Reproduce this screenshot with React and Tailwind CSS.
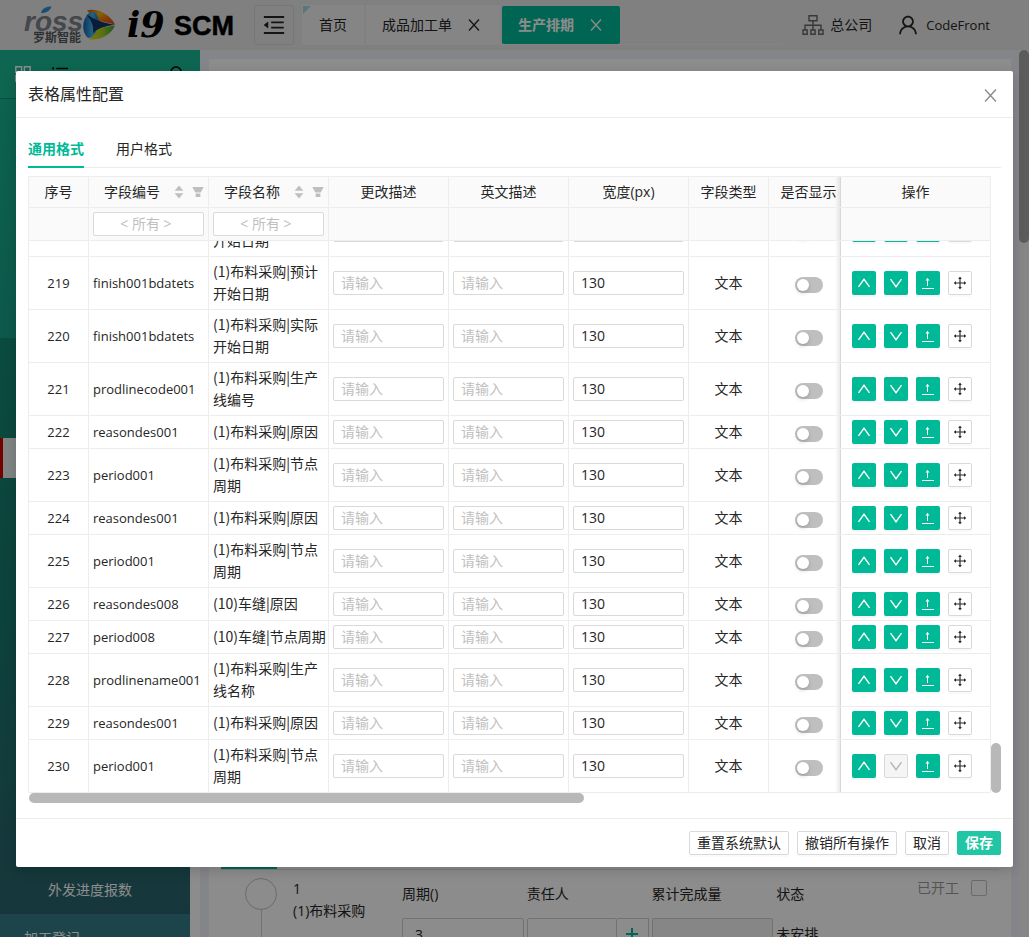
import React from 'react';
import {
  AiOutlineDrag,
  AiOutlineUser,
  AiOutlineMenuFold,
  AiOutlineAppstore,
  AiOutlineUnorderedList,
  AiOutlineSearch,
} from 'react-icons/ai';

const ROWS = [
  { no: 218, code: 'finish001bdatets', name: ['(1)布料采购|计划', '开始日期'] },
  { no: 219, code: 'finish001bdatets', name: ['(1)布料采购|预计', '开始日期'] },
  { no: 220, code: 'finish001bdatets', name: ['(1)布料采购|实际', '开始日期'] },
  { no: 221, code: 'prodlinecode001', name: ['(1)布料采购|生产', '线编号'] },
  { no: 222, code: 'reasondes001', name: ['(1)布料采购|原因'] },
  { no: 223, code: 'period001', name: ['(1)布料采购|节点', '周期'] },
  { no: 224, code: 'reasondes001', name: ['(1)布料采购|原因'] },
  { no: 225, code: 'period001', name: ['(1)布料采购|节点', '周期'] },
  { no: 226, code: 'reasondes008', name: ['(10)车缝|原因'] },
  { no: 227, code: 'period008', name: ['(10)车缝|节点周期'] },
  { no: 228, code: 'prodlinename001', name: ['(1)布料采购|生产', '线名称'] },
  { no: 229, code: 'reasondes001', name: ['(1)布料采购|原因'] },
  { no: 230, code: 'period001', name: ['(1)布料采购|节点', '周期'] },
];

const CELL = 'border-r border-b border-[#ededed] px-1';
const FIXED =
  "sticky right-0 border-r border-b border-l border-[#ededed] before:absolute before:inset-y-0 before:right-full before:w-1.5 before:bg-linear-to-l before:from-black/10 before:to-transparent before:content-['']";
const FIELD =
  'block h-6 w-full min-w-0 rounded-xs border border-[#d9d9d9] bg-white px-[7px] pb-0.5 text-sm text-[#262626] placeholder:text-[#bfbfbf] outline-none';
const PRIMARY =
  'flex size-6 items-center justify-center rounded-xs bg-[#00b996] text-sm text-white shadow-[0_2px_0_rgba(0,0,0,0.04)]';
const PLAIN =
  'flex size-6 items-center justify-center rounded-xs border border-[#d9d9d9] bg-white text-base text-[#262626] shadow-[0_2px_0_rgba(0,0,0,0.02)]';
const FOOT =
  'h-6 rounded-xs border border-[#d9d9d9] bg-white px-[7px] text-sm leading-5 whitespace-nowrap text-[#262626] shadow-[0_2px_0_rgba(0,0,0,0.02)]';

function Columns() {
  return (
    <colgroup>
      <col className="w-[61px]" />
      <col className="w-[120px]" />
      <col className="w-[120px]" />
      <col className="w-[120px]" />
      <col className="w-[120px]" />
      <col className="w-[120px]" />
      <col className="w-[80px]" />
      <col className="w-[80px]" />
      <col className="w-[151px]" />
    </colgroup>
  );
}

function Sorter() {
  return (
    <svg viewBox="0 0 10 14" className="h-3.5 w-2.5" fill="#bfbfbf" aria-hidden="true">
      <path d="M5 .6 9.400 5.800H.6zM5 13.400.6 8.200h8.800z" />
    </svg>
  );
}

function Filter() {
  return (
    <svg viewBox="0 0 12 12" className="size-3" fill="#bfbfbf" aria-hidden="true">
      <path d="M.8 1h10.400c.4 0 .5.3.3.6L8.600 6.400H3.400L.5 1.600C.3 1.300.4 1 .8 1zM3.600 7.600h4.800v3c0 .3-.1.4-.4.4H4c-.3 0-.4-.1-.4-.4z" />
    </svg>
  );
}

function Close({ className }) {
  return (
    <svg viewBox="0 0 12 12" className={className} fill="none" stroke="currentColor" strokeWidth="1.3" aria-hidden="true">
      <path d="M1 .5 11 11.500M11 .5 1 11.500" />
    </svg>
  );
}

function Up() {
  return (
    <svg viewBox="0 0 14 14" className="size-3.5" fill="none" stroke="currentColor" strokeWidth="1.4" aria-hidden="true">
      <path d="M1.500 10.800 7 3.300l5.500 7.500" />
    </svg>
  );
}

function Down() {
  return (
    <svg viewBox="0 0 14 14" className="size-3.5" fill="none" stroke="currentColor" strokeWidth="1.4" aria-hidden="true">
      <path d="M1.500 3.200 7 10.700l5.500-7.500" />
    </svg>
  );
}

function Lift() {
  return (
    <svg viewBox="0 0 14 14" className="size-3.5" fill="none" stroke="currentColor" aria-hidden="true">
      <path d="M1 12.500h12M6.500 10V2.500" />
      <path d="M4.500 4.600 6.500 2l2 2.600z" fill="currentColor" stroke="none" />
    </svg>
  );
}

function OrgIcon() {
  return (
    <svg viewBox="0 0 22 20" className="h-5 w-[22px]" fill="none" stroke="#666" strokeWidth="1.4" aria-hidden="true">
      <path d="M7 .8h8v5H7zM11 6v9M3 15V10.200h16V15M1 15h4.200v4.200H1zM8.900 15h4.200v4.200H8.900zM16.800 15H21v4.200h-4.200z" />
    </svg>
  );
}

function Logo() {
  return (
    <svg viewBox="0 0 214 40" className="h-10 w-[214px] overflow-visible" role="img" aria-label="róss 罗斯智能 i9 SCM">
      <defs>
        <linearGradient id="top" x1="0" y1="0" x2="1" y2="1">
          <stop offset="0" stopColor="#e8480e" />
          <stop offset="0.35" stopColor="#f2b705" />
          <stop offset="0.65" stopColor="#ef6c10" />
          <stop offset="1" stopColor="#d8420f" />
        </linearGradient>
        <linearGradient id="low" x1="0" y1="0" x2="1" y2="0">
          <stop offset="0" stopColor="#e9d814" />
          <stop offset="0.5" stopColor="#a8d020" />
          <stop offset="1" stopColor="#3f9a3a" />
        </linearGradient>
        <linearGradient id="leaf" x1="0" y1="0" x2="1" y2="0">
          <stop offset="0" stopColor="#1660ac" />
          <stop offset="0.6" stopColor="#3fb4ec" />
          <stop offset="1" stopColor="#1c78c4" />
        </linearGradient>
      </defs>
      <text x="0" y="26" fontFamily="Liberation Sans" fontStyle="italic" fontWeight="700" fontSize="28" fill="#7d828a">
        ross
      </text>
      <path d="M17 8c1-4 4-6.500 10.500-6.500-1.500 4-4.500 6.500-10.500 6.500z" fill="#2e8fd0" />
      <text x="9" y="37" fontFamily="Noto Sans CJK SC" fontWeight="700" fontSize="12" fill="#555a60">
        罗斯智能
      </text>
      <path d="M63 5.500C71 3 85 8 91 19.500L74 15.500C70 13 66 9 63 5.500z" fill="url(#top)" />
      <path d="M65 34.500C76 35.500 87 30 91 20.500L74 23C72 27 69 31 65 34.500z" fill="url(#low)" />
      <path d="M65 8c6-3 9 1 9.500 8L72 27c-3 4-5 6-8 6-6-5-7-18 1-25z" fill="url(#leaf)" />
      <path d="M62 9c7 5 17 9 29 10.700-8 1-17 3-22 8.300 1-8-2-13-7-19z" fill="#123468" />
      <text x="103" y="32" fontFamily="DejaVu Serif" fontStyle="italic" fontWeight="700" fontSize="35" fill="#000">
        i9
      </text>
      <text x="150" y="30" fontFamily="Liberation Sans" fontWeight="700" fontSize="27" stroke="#000" strokeWidth="0.5" fill="#000">
        SCM
      </text>
    </svg>
  );
}

function TopBar() {
  return (
    <header className="flex h-[50px] shrink-0 items-start bg-[#e9e9e9] pt-[5px] pl-6 text-sm text-[#262626]">
      <div className="mr-4 shrink-0">
        <Logo />
      </div>
      <button type="button" aria-label="折叠菜单" className="flex size-10 shrink-0 items-center justify-center rounded-xs border border-[#d9d9d9] text-[26px]">
        <AiOutlineMenuFold />
      </button>
      <nav className="ml-2 flex h-10 min-w-0 flex-1 gap-0.5 border-b border-[#f0f0f0]">
        <a href="#home" className="relative flex items-center bg-[#f2f2f2] px-[17px]">
          <svg viewBox="0 0 8 8" className="absolute top-px left-px size-2" aria-hidden="true">
            <path d="M0 0h8L0 8z" fill="#9fd9e6" />
          </svg>
          首页
        </a>
        <div className="flex items-center gap-4 bg-[#f2f2f2] pr-5 pl-4">
          <a href="#order">成品加工单</a>
          <button type="button" aria-label="关闭 成品加工单">
            <Close className="h-3 w-3" />
          </button>
        </div>
        <div className="mt-px flex h-[38px] items-center gap-4 rounded-xs bg-[#00b996] px-4 font-bold text-white">
          <a href="#schedule">生产排期</a>
          <button type="button" aria-label="关闭 生产排期" className="pr-0.5">
            <Close className="h-3 w-3" />
          </button>
        </div>
      </nav>
      <div className="flex h-10 shrink-0 items-center pr-[39px] pl-5">
        <a href="#company" className="flex items-center gap-1.5">
          <OrgIcon />
          总公司
        </a>
        <a href="#user" className="ml-6 flex items-center gap-1.5 text-[13px]">
          <AiOutlineUser className="size-6" />
          CodeFront
        </a>
      </div>
    </header>
  );
}

function SideBar() {
  return (
    <aside className="flex w-[200px] shrink-0 flex-col overflow-hidden text-sm text-white">
      <div className="flex h-12 shrink-0 items-center gap-4 bg-[#1ab894] px-3">
        <AiOutlineAppstore className="size-[22px]" />
        <AiOutlineUnorderedList className="size-5 text-black" />
        <AiOutlineSearch className="ml-auto size-5 text-black" />
      </div>
      <div className="flex w-[190px] flex-1 flex-col overflow-hidden border-t border-[#0e8e72] bg-linear-to-b from-[#17b290] via-[#1a8f80] via-60% to-[#31737f]">
        <div className="h-[239px] shrink-0" />
        <div className="h-[100px] shrink-0 bg-black/15" />
        <div className="h-10 shrink-0 border-l-[3px] border-[#d40000] bg-[#e8f1ee]" />
        <div className="flex h-[436px] shrink-0 flex-col justify-end bg-black/15">
          <a href="#outsource" className="flex h-12 items-center pl-12">
            外发进度报数
          </a>
        </div>
        <a href="#register" className="flex h-12 shrink-0 items-center bg-[#357c88] pl-6">
          加工登记
        </a>
      </div>
    </aside>
  );
}

function Content() {
  const box = 'h-8 w-full min-w-0 rounded-xs border border-[#cfcfcf] px-3 text-sm outline-none';
  return (
    <main className="flex min-w-0 flex-1 overflow-hidden bg-[#eff3f8] pt-[9px] pr-2 pl-[9px] text-sm text-[#262626]">
      <div className="min-w-0 flex-1 overflow-hidden bg-white px-3">
        <div className="flex h-[811px] items-end border-b border-[#e4e4e4]">
          <div className="h-0.5 w-14 bg-[#00b996]" />
        </div>
        <div className="flex pl-6">
          <div className="mt-2 flex flex-col items-center">
            <div className="size-8 rounded-full border border-[#c4c4c4]" />
            <div className="h-10 w-px bg-[#d0d0d0]" />
          </div>
          <div className="mt-2 ml-4 w-[109px] shrink-0 leading-[22px]">
            <div>1</div>
            <div>(1)布料采购</div>
          </div>
          <div className="mt-3 grid w-[496px] shrink-0 grid-cols-4 gap-x-[3px] gap-y-3 leading-6">
            <label htmlFor="cycle">周期()</label>
            <label htmlFor="owner">责任人</label>
            <label htmlFor="done">累计完成量</label>
            <div>状态</div>
            <input id="cycle" className={box} defaultValue="3" />
            <div className="flex">
              <input id="owner" className={box} />
              <button type="button" aria-label="添加责任人" className="flex h-8 w-8 shrink-0 items-center justify-center border border-l-0 border-[#cfcfcf] text-[#00b996]">
                <svg viewBox="0 0 12 12" className="size-3" fill="none" stroke="currentColor" strokeWidth="2" aria-hidden="true">
                  <path d="M6 0v12M0 6h12" />
                </svg>
              </button>
            </div>
            <input id="done" className={box + ' bg-[#f5f5f5]'} />
            <div className="leading-8">未安排</div>
          </div>
          <label className="mt-2 ml-auto flex h-5 shrink-0 items-center gap-3 pr-3 text-[#9a9a9a]">
            已开工
            <input type="checkbox" className="size-4 appearance-none rounded-xs border border-[#c4c4c4]" />
          </label>
        </div>
      </div>
    </main>
  );
}

function HeadTable() {
  const plain = CELL + ' text-center font-normal';
  return (
    <table className="w-full min-w-[972px] table-fixed border-separate border-spacing-0 bg-[#fafafa]">
      <Columns />
      <thead>
        <tr className="h-[31px]">
          <th className={plain + ' border-l'}>序号</th>
          {['字段编号', '字段名称'].map((t) => (
            <th key={t} className={CELL + ' font-normal'}>
              <div className="flex items-center justify-end gap-2">
                <span className="mr-1.5">{t}</span>
                <Sorter />
                <Filter />
              </div>
            </th>
          ))}
          {['更改描述', '英文描述', '宽度(px)', '字段类型'].map((t) => (
            <th key={t} className={plain}>
              {t}
            </th>
          ))}
          <th className={plain + ' whitespace-nowrap'}>是否显示</th>
          <th className={FIXED + ' bg-[#fafafa] text-center font-normal'}>操作</th>
        </tr>
        <tr className="h-[33px]">
          <td className={CELL + ' border-l'} />
          <td className={CELL}>
            <input aria-label="筛选字段编号" placeholder="< 所有 >" className={FIELD + ' pr-3 text-center'} />
          </td>
          <td className={CELL}>
            <input aria-label="筛选字段名称" placeholder="< 所有 >" className={FIELD + ' pr-3 text-center'} />
          </td>
          <td className={CELL} />
          <td className={CELL} />
          <td className={CELL} />
          <td className={CELL} />
          <td className={CELL} />
          <td className={FIXED + ' bg-[#fafafa]'} />
        </tr>
      </thead>
    </table>
  );
}

function BodyRow({ row, last }) {
  return (
    <tr className={row.name.length > 1 ? 'h-[53px]' : 'h-[33px]'}>
      <td className={CELL + ' border-l text-center text-[13px]'}>{row.no}</td>
      <td className={CELL + ' text-[13px] whitespace-nowrap'}>{row.code}</td>
      <td className="border-r border-b border-[#ededed] pb-0.5 pl-1 font-['Noto_Sans_CJK_SC',sans-serif] whitespace-nowrap">
        {row.name.map((line) => (
          <div key={line}>{line}</div>
        ))}
      </td>
      <td className={CELL}>
        <input aria-label={'更改描述 ' + row.no} placeholder="请输入" className={FIELD} />
      </td>
      <td className={CELL}>
        <input aria-label={'英文描述 ' + row.no} placeholder="请输入" className={FIELD} />
      </td>
      <td className={CELL}>
        <input aria-label={'宽度 ' + row.no} defaultValue="130" className={FIELD} />
      </td>
      <td className={CELL + ' text-center'}>文本</td>
      <td className={CELL + ' pt-1'}>
        <button
          type="button"
          role="switch"
          aria-checked="false"
          aria-label={'是否显示 ' + row.no}
          className="mx-auto flex h-4 w-7 items-center rounded-full bg-[#bfbfbf] pl-0.5"
        >
          <span className="size-3 rounded-full bg-white shadow-[0_2px_4px_rgba(0,35,11,0.2)]" />
        </button>
      </td>
      <td className={FIXED + ' bg-white pl-[11px]'}>
        <div className="flex gap-2">
          <button type="button" aria-label="上移" className={PRIMARY}>
            <Up />
          </button>
          <button
            type="button"
            aria-label="下移"
            disabled={last}
            className={
              last
                ? 'flex size-6 items-center justify-center rounded-xs border border-[#d9d9d9] bg-[#f5f5f5] text-sm text-[#b5b5b5]'
                : PRIMARY
            }
          >
            <Down />
          </button>
          <button type="button" aria-label="置顶" className={PRIMARY}>
            <Lift />
          </button>
          <button type="button" aria-label="拖动" className={PLAIN}>
            <AiOutlineDrag className="size-4" />
          </button>
        </div>
      </td>
    </tr>
  );
}

function Dialog() {
  return (
    <section
      role="dialog"
      aria-label="表格属性配置"
      className="rounded-xs bg-white text-sm leading-[22px] text-[#262626] shadow-[0_4px_12px_rgba(0,0,0,0.15)]"
    >
      <div className="flex h-[47px] items-center justify-between border-b border-[#ededed] px-3">
        <h1 className="text-base">表格属性配置</h1>
        <button type="button" aria-label="关闭" className="pt-0.5 pr-1 text-[#8c8c8c]">
          <Close className="size-[13px]" />
        </button>
      </div>
      <div className="px-3 pt-3 pb-[15px]">
        <div role="tablist" className="flex gap-8 border-b border-[#ededed]">
          <button type="button" role="tab" aria-selected="true" className="-mb-px h-[38px] border-b-2 border-[#00b996] pt-0.5 font-bold text-[#00b996]">
            通用格式
          </button>
          <button type="button" role="tab" aria-selected="false" className="-mb-px h-[38px] border-b-2 border-transparent pt-0.5">
            用户格式
          </button>
        </div>
        <div className="mt-2 flex items-end">
          <div className="min-w-0 flex-1">
            <div className="overflow-hidden border-t border-[#ededed]">
              <HeadTable />
            </div>
            <div className="flex h-[552px] flex-col justify-end overflow-hidden">
              <div className="shrink-0 overflow-hidden">
                <table className="w-full min-w-[972px] table-fixed border-separate border-spacing-0">
                  <Columns />
                  <tbody>
                    {ROWS.map((row) => (
                      <BodyRow key={row.no} row={row} last={row.no === 230} />
                    ))}
                  </tbody>
                </table>
              </div>
            </div>
          </div>
          <div className="h-[50px] w-2.5 shrink-0 rounded-full bg-[#b8b8b8]" />
        </div>
        <div className="ml-px h-2.5 w-[57%] rounded-full bg-[#b8b8b8]" />
      </div>
      <div className="flex h-[49px] items-center justify-end gap-2 border-t border-[#ededed] px-3">
        <button type="button" className={FOOT}>
          重置系统默认
        </button>
        <button type="button" className={FOOT}>
          撤销所有操作
        </button>
        <button type="button" className={FOOT}>
          取消
        </button>
        <button type="button" className="h-6 rounded-xs border border-[#21c7a4] bg-[#21c7a4] px-[7px] text-sm leading-5 font-bold whitespace-nowrap text-white">
          保存
        </button>
      </div>
    </section>
  );
}

export default function App() {
  return (
    <div className="relative flex h-screen flex-col overflow-hidden font-['Open_Sans','Noto_Sans_CJK_SC',sans-serif]">
      <TopBar />
      <div className="flex min-h-0 flex-1">
        <SideBar />
        <Content />
        <div className="w-2.5 shrink-0 bg-[#f5f5f5]">
          <div className="h-[193px] rounded-full bg-[#a8a8a8]" />
        </div>
      </div>
      <div className="absolute inset-0 overflow-hidden bg-black/45 pt-[71px] pr-4 pl-4">
        <Dialog />
      </div>
    </div>
  );
}
